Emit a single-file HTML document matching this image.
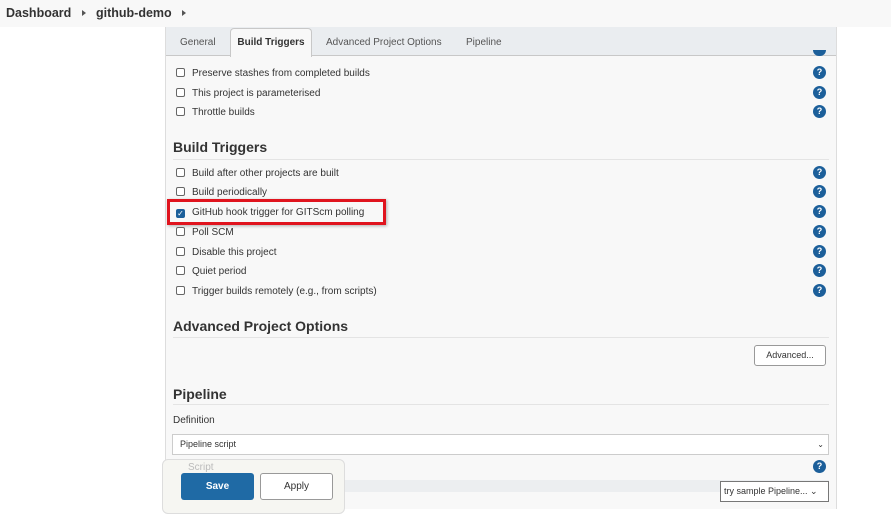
<!DOCTYPE html><html><head><style>
*{box-sizing:border-box;margin:0;padding:0}
body{width:891px;height:509px;overflow:hidden;background:#fff;font-family:"Liberation Sans",sans-serif;position:relative;color:#333}
.a{position:absolute}
.top{left:0;top:0;width:891px;height:27px;background:#f8f8f8}
.bc{top:6px;font-size:12.5px;font-weight:bold;color:#333}
.arr{width:0;height:0;border-left:4px solid #555;border-top:3px solid transparent;border-bottom:3px solid transparent;top:10px}
.panel{left:165px;top:27px;width:672px;height:482px;background:#f8f8f8;border-left:1px solid #ddd;border-right:1px solid #ddd}
.tabs{left:166px;top:27px;width:670px;height:29px;background:#eaedf0;border-bottom:1px solid #c8c8c8}
.tab{top:37px;font-size:10px;color:#555}
.tabon{left:230px;top:28px;width:82px;height:29px;background:#f8f8f8;border:1px solid #c8c8c8;border-bottom:none;border-radius:4px 4px 0 0;font-size:10px;font-weight:bold;text-align:center;line-height:28px;color:#333}
.row{left:176px;font-size:10px;color:#333;height:14px;line-height:14px}
.cb{display:inline-block;width:9px;height:9px;border:1px solid #666;border-radius:2px;background:#fff;vertical-align:-1px;margin-right:7px}
.h{width:13px;height:13px;border-radius:50%;background:#1c5f9a;color:#fff;font-size:9px;font-weight:bold;text-align:center;line-height:13px;left:813px}
.hd{left:173px;font-size:14px;font-weight:bold;color:#333}
.line{left:173px;width:656px;height:1px;background:#e4e4e4}
</style></head><body>
<div class="a top"></div>
<div class="a bc" style="left:6px">Dashboard</div><div class="a arr" style="left:82px"></div>
<div class="a bc" style="left:96px">github-demo</div><div class="a arr" style="left:182px"></div>
<div class="a panel"></div>
<div class="a tabs"></div>
<div class="a tab" style="left:180px">General</div>
<div class="a tabon">Build Triggers</div>
<div class="a tab" style="left:326px">Advanced Project Options</div>
<div class="a tab" style="left:466px">Pipeline</div>
<div class="a h" style="top:50px;height:6px;border-radius:0 0 6px 6px"></div>
<div class="a row" style="top:67px"><span class="cb"></span>Preserve stashes from completed builds</div><div class="a h" style="top:66px">?</div>
<div class="a row" style="top:87px"><span class="cb"></span>This project is parameterised</div><div class="a h" style="top:86px">?</div>
<div class="a row" style="top:106px"><span class="cb"></span>Throttle builds</div><div class="a h" style="top:105px">?</div>
<div class="a hd" style="top:139px">Build Triggers</div><div class="a line" style="top:159px"></div>
<div class="a row" style="top:167px"><span class="cb"></span>Build after other projects are built</div><div class="a h" style="top:166px">?</div>
<div class="a row" style="top:186px"><span class="cb"></span>Build periodically</div><div class="a h" style="top:185px">?</div>
<div class="a row" style="top:206px"><span class="cb" style="background:#1c5f9a;border-color:#1c5f9a;color:#fff;font-size:8px;line-height:7px;text-align:center">✓</span>GitHub hook trigger for GITScm polling</div><div class="a h" style="top:205px">?</div>
<div class="a" style="left:167px;top:199px;width:219px;height:26px;border:3px solid #e0141e;box-shadow:1px 1px 3px rgba(0,0,0,.3)"></div>
<div class="a row" style="top:226px"><span class="cb"></span>Poll SCM</div><div class="a h" style="top:225px">?</div>
<div class="a row" style="top:246px"><span class="cb"></span>Disable this project</div><div class="a h" style="top:245px">?</div>
<div class="a row" style="top:265px"><span class="cb"></span>Quiet period</div><div class="a h" style="top:264px">?</div>
<div class="a row" style="top:285px"><span class="cb"></span>Trigger builds remotely (e.g., from scripts)</div><div class="a h" style="top:284px">?</div>
<div class="a hd" style="top:318px">Advanced Project Options</div><div class="a line" style="top:337px"></div>
<div class="a" style="left:754px;top:345px;width:72px;height:21px;border:1px solid #999;border-radius:3px;background:#fff;font-size:9px;text-align:center;line-height:19px">Advanced...</div>
<div class="a hd" style="top:386px">Pipeline</div><div class="a line" style="top:404px"></div>
<div class="a" style="left:173px;top:415px;font-size:10px">Definition</div>
<div class="a" style="left:172px;top:434px;width:657px;height:21px;border:1px solid #ccc;background:#fff;font-size:9px;line-height:19px;padding-left:7px">Pipeline script<span style="position:absolute;right:4px;font-size:8px">⌄</span></div>
<div class="a h" style="top:460px">?</div>
<div class="a" style="left:172px;top:480px;width:657px;height:12px;background:#eceef0"></div>
<div class="a" style="left:720px;top:481px;width:109px;height:21px;border:1px solid #777;background:#fff;font-size:9px;line-height:19px;padding-left:3px">try sample Pipeline... ⌄</div>
<div class="a" style="left:162px;top:459px;width:183px;height:55px;background:#f6f6f2;border:1px solid #ddd;border-radius:6px"></div>
<div class="a" style="left:188px;top:462px;font-size:10px;color:#bbb">Script</div>
<div class="a" style="left:181px;top:473px;width:73px;height:27px;background:#1f6aa5;border-radius:3px;color:#fff;font-size:10px;font-weight:bold;text-align:center;line-height:28px">Save</div>
<div class="a" style="left:260px;top:473px;width:73px;height:27px;background:#fff;border:1px solid #999;border-radius:3px;font-size:10px;text-align:center;line-height:26px">Apply</div>
</body></html>
